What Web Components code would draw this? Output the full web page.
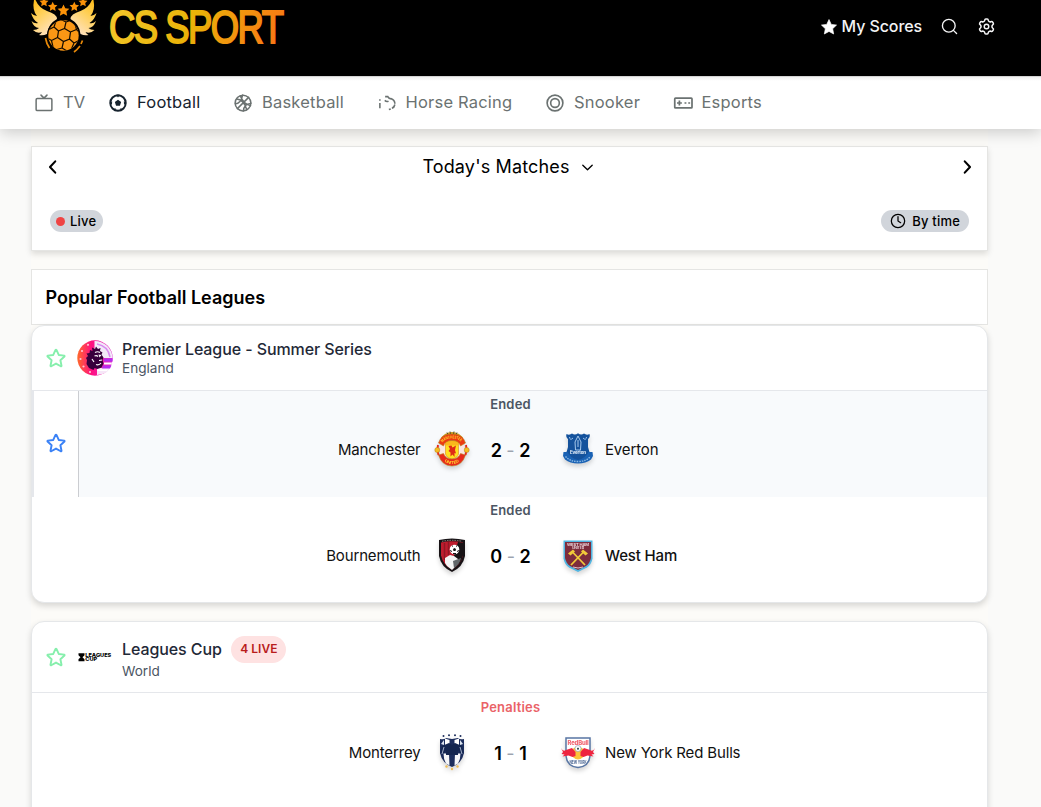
<!DOCTYPE html>
<html lang="en">
<head>
<meta charset="utf-8">
<title>CS Sport</title>
<style>
body{margin:0;background:#fafaf9;font-family:Inter,"Liberation Sans",sans-serif;color:#000;overflow:hidden;height:807px}
</style>
</head>
<body>
<cs-app></cs-app>
<script>
const define=(name,html,after)=>{
  const t=document.createElement('template');t.innerHTML=html;
  customElements.define(name,class extends HTMLElement{
    constructor(){super();this.attachShadow({mode:'open'}).append(t.content.cloneNode(true));}
    connectedCallback(){if(after)after(this,this.shadowRoot);}
  });
};

const STAR='M12 .8l3.400 7.300 7.900 1-5.800 5.500 1.500 7.900L12 18.600l-7 3.900 1.500-7.900L.7 9.100l7.900-1z';
const line=(b,w=2)=>`<g fill="none" stroke="currentColor" stroke-width="${w}" stroke-linecap="round" stroke-linejoin="round">${b}</g>`;
const ICONS={
  starFill:`<path fill="currentColor" stroke="currentColor" stroke-linejoin="round" d="${STAR}"/>`,
  star:line('<path d="M11.500 3.200a.6.6 0 0 1 1 0l2.500 5.500 5.900.7a.6.6 0 0 1 .3 1l-4.400 4.100 1.200 5.900a.6.6 0 0 1-.8.600L12 18.100l-5.200 2.900a.6.6 0 0 1-.8-.6l1.200-5.900-4.400-4.100a.6.6 0 0 1 .3-1L9 8.700z"/>',2.100),
  search:line('<circle cx="11" cy="11" r="9"/><path d="M17.500 17.500 22 22"/>',1.900),
  gear:line('<path transform="translate(12 12) scale(1.070) translate(-12 -12)" d="M9.600 3.900c.1-.9.7-1.900 1.500-1.900h1.800c.8 0 1.400 1 1.500 1.900.1.8.6 1.300 1.300 1.700s1.400.4 2.100.1c.8-.4 1.900-.3 2.300.4l.9 1.600c.4.700 0 1.700-.8 2.200-.6.5-1 1.200-1 2.100s.4 1.600 1 2.100c.8.5 1.200 1.500.8 2.200l-.9 1.600c-.4.700-1.500.8-2.300.4-.7-.3-1.400-.3-2.100.1s-1.200.9-1.300 1.700c-.1.9-.7 1.900-1.500 1.900h-1.800c-.8 0-1.400-1-1.500-1.900-.1-.8-.6-1.300-1.300-1.700s-1.400-.4-2.100-.1c-.8.4-1.900.3-2.300-.4L3 16.300c-.4-.7 0-1.700.8-2.200.6-.5 1-1.200 1-2.100s-.4-1.600-1-2.100C3 9.400 2.600 8.400 3 7.700l.9-1.600c.4-.7 1.500-.8 2.300-.4.7.3 1.400.3 2.100-.1s1.200-.9 1.300-1.700z"/><circle cx="12" cy="12" r="3.200"/>',2),
  tv:line('<rect x="1.500" y="6" width="21" height="16" rx="1.500"/><path d="M8 1.500 12 5.500 16 1.500"/>',2),
  ball:`<circle cx="12" cy="12" r="10.300" fill="none" stroke="currentColor" stroke-width="2.600"/><path fill="currentColor" d="M12 7.800l4.200 3-1.600 5H9.400l-1.600-5zM9.500 1h5L12 4.500zM1 12.500l3.200-3L4 14zM23 12.500l-3.200-3 .2 4.500zM6 19.500l3.500-.2-1.500 3zM18 19.500l-3.500-.2 1.500 3z"/>`,
  basket:line('<circle cx="12" cy="12" r="10.500"/><path d="M4.500 19.500 19.500 4.500M3.500 6.500c5.500 0 11 5.500 13.500 14.500M1.800 13c4.500 0 8-3.500 9.700-11.500M12.500 22.500c.5-6 4-9.500 10-10M8.500 2.500c2.500 7 6.500 11.500 13.500 13"/>',2),
  horse:`<g fill="none" stroke="currentColor" stroke-width="2.100"><path d="M2.500 7v2M2.500 12v7M9.500 3.500h3.500q1.500 3 4.500 3M9 8.500q2.500 2.500 5 1M17 6q5.500 2 5.500 7M22.500 14q-.7 4-4 5M17 20l-2.500.8"/></g>`,
  snooker:line('<circle cx="12" cy="12" r="10.500"/><circle cx="12" cy="12" r="5.800"/>',2.200),
  pad:`<g fill="none" stroke="currentColor" stroke-width="2.300"><rect x="1" y="5.500" width="23" height="13" rx="1"/><path d="M4 12h6.500M7.200 8.700v6.600M14 12h2.500M19 12h2.500"/></g>`,
  left:line('<path d="M15 4.500 8 12l7 7.500"/>',2.800),
  right:line('<path d="M9 4.500 16 12l-7 7.500"/>',2.800),
  down:line('<path d="M4.500 8.500 12 15.500 19.500 8.500"/>',2.200),
  clock:line('<circle cx="12" cy="12" r="10"/><path d="M12 5.500V12l4 2.500"/>',1.900)
};
define('cs-icon',`<style>:host{display:block;flex:none;width:var(--s,18px);height:var(--s,18px)}svg{display:block;width:100%;height:100%;overflow:visible}</style><svg viewBox="0 0 24 24"></svg>`,
  (h,r)=>{h.style.setProperty('--s',(h.getAttribute('size')||18)+'px');r.querySelector('svg').innerHTML=ICONS[h.getAttribute('name')];});

const F='font-family="Inter,sans-serif"';
const CRESTS={
  pl:`<defs><linearGradient id="a"><stop offset="0" stop-color="#ff6a2b"/><stop offset=".4" stop-color="#ff1080"/><stop offset="1" stop-color="#e02fce"/></linearGradient></defs>
    <circle cx="18" cy="18" r="17.700" fill="url(#a)"/><path d="M17.500 1A17.500 17.500 0 0 1 35.500 18H25l-7.500-6z" fill="#f2e9f8"/><path d="M20 4q11 2 13 13" fill="none" stroke="#d98af0" stroke-width="1.500"/><path d="M20 28h13l-3 4q-5 3-10 3z" fill="#f6e6f7"/>
    <path d="M27 18.500h8.500v3H27zM26 25.500h8.500l-1.500 3h-8z" fill="#b52df0"/><path d="M27 22.500h8l-.5 2H27zM21 29.500h10l-1 1.500H20z" fill="#fff"/>
    <g fill="#ffc3d4"><circle cx="11" cy="4.800" r="1.100"/><circle cx="5" cy="11" r="1.100"/><circle cx="3.500" cy="19" r="1.100"/><circle cx="6.500" cy="26.500" r="1.100"/><circle cx="13" cy="32" r="1.100"/></g>
    <path d="M13 10l2.500 1L15 7.500l3 1.500 1-2.500 2 2.500 2.500-1-.5 3 2.500 1.500-1 2 2 3-1 2.500 1 3.500-2 4-4 1.500-3-1-1 2-4.500-2-2.500-4 .500-4L9 18l2-2-1.500-2.500 3-.5z" fill="#37003c"/><path d="M18 12.500q2.500-1.500 5 0M17.500 16q2-1 3.500.5M22 20.500l3-.5M19 24.500q3 1 5-1.500M15 19l2 3" stroke="#fff" stroke-width="1.200" fill="none"/><path d="M21.500 14.500l3 .5-2 2.500z" fill="#fff"/>`,
  lc:`<path d="M1.500 14.300h6v2l-2 2 2 2v2h-6v-2l2-2-2-2z"/><g ${F} font-weight="800" font-size="5"><text x="8.300" y="18" textLength="26" lengthAdjust="spacingAndGlyphs">LEAGUES</text><text x="8.300" y="22.300" textLength="12" lengthAdjust="spacingAndGlyphs">CUP</text></g>`,
  mun:`<path d="M11 3q7-4 14 0l4 3.500-2 3H9l-2-3z" fill="#c99a20"/><path d="M13 1.500l1 2M16 .5l.500 2.500M20 .5 19.500 3M23 1.500l-1 2" stroke="#55502c" stroke-width="1"/>
    <path d="M6 12h24v13H6z" fill="#fbe6e0"/><path d="M11.500 10h13v13q-1 4-6.500 5-5.500-1-6.500-5z" fill="#ffdf20" stroke="#e0861a" stroke-width=".6"/><path d="M11.500 10h13v4.500h-13z" fill="#fab81c"/>
    <path d="M4.500 12Q7 3 18 3t13.500 9l-5 3Q25 9.500 18 9.500T9.500 15z" fill="#ec3a12" stroke="#b8801a" stroke-width=".6"/>
    <path d="M4 14q-1.500 5 .5 10M32 14q1.500 5-.5 10" fill="none" stroke="#e8291c" stroke-width="2"/><circle cx="3.300" cy="19" r="2.500" fill="#f6be20" stroke="#b87d10" stroke-width=".5"/><circle cx="32.700" cy="19" r="2.500" fill="#f6be20" stroke="#b87d10" stroke-width=".5"/>
    <path d="M14.500 15l3-.5 1 2 3.500-2-1 4.500 1 3.500-1.500-.5v4l-2-2.500-2 2V21.500l-2-1.500 1.500-2z" fill="#df2a16"/>
    <path d="M4.500 24l5-1.500Q11.500 28 18 28t8.500-5.500l5 1.500Q28 35 18 35 8 35 4.500 24z" fill="#e8291c" stroke="#b8801a" stroke-width=".6"/>
    <defs><path id="m1" d="M8.500 11.500Q11 7.500 18 7.500t9.500 4"/><path id="m2" d="M9 28.500Q12 33 18 33t9-4.500"/></defs><g ${F} fill="#ffce2a" font-weight="700" font-size="4"><text><textPath href="#m1" textLength="20" lengthAdjust="spacingAndGlyphs">MANCHESTER</textPath></text><text><textPath href="#m2" startOffset="2" textLength="16" lengthAdjust="spacingAndGlyphs">UNITED</textPath></text></g>`,
  eve:`<path d="M6.500 3q3 1.500 5.500-.5 3 2 6-.3 3 2.300 6 .3 2.500 2 5.500.5 1 3-1.500 5v8q1 4 2 6H6q1-2 2-6V8Q5.500 6 6.500 3z" fill="#14529c"/><path d="M18 5l3 6-.5 8h-5L15 11z" fill="none" stroke="#a5c8ec" stroke-width="1"/><path d="M18 9v7" stroke="#a5c8ec"/><path d="M9.500 6q.5 4 3.500 1M26.500 6q-.5 4-3.500 1" stroke="#9ac1eb" fill="none"/><path d="M3.500 21h5q3 5.500 9.500 6.500 6.500-1 9.500-6.500h5l.5 4-2 3.500q-5 4-13 4T5 28.500l-2-3.500z" fill="#1a62b4"/>
    <path d="M7 20h22q-3 7-11 9-8-2-11-9z" fill="#14529c"/><text x="10" y="23" ${F} font-size="4.800" font-weight="700" fill="#e7f1fb" textLength="16" lengthAdjust="spacingAndGlyphs">Everton</text><path d="M5.500 25.500q4.500 5 12.500 5t12.500-5" stroke="#8dbae4" stroke-width="1.400" stroke-dasharray="1.500 1" fill="none"/>`,
  bou:`<path d="M5 3q13-3 26 0v16q-2 11-13 16Q7 30 5 19z" fill="#171215"/><path d="M7 5.500q11-2.500 22 0v13q-2 9-11 14Q9 28 7 18.500z" fill="#be1c2e"/><path d="M10.500 6v17M14.500 5V18" stroke="#8f1724" stroke-width="1.500"/><path d="M24 5l5 .8v12.700q-2 9-11 14l-4-4 6-10z" fill="#171215"/><path d="M11 21l5-3 4 1 4 3 1 3-5 6-2 2-5-4-2-3z" fill="#f4f4f4"/><path d="M19 24l8-3q-1 6-7 10z" fill="#626669"/><circle cx="20.500" cy="12.500" r="4.800" fill="#fff"/><path d="M20.500 11l1.500 1-.5 2h-2l-.5-2z" fill="#171215"/><path d="M16.500 13l1 2M24.500 13l-1 2M19 16.500h3M18 9.500l1-.8M23 9.500l-1-.8" stroke="#171215" stroke-width="1"/><path d="M8 4.300q10-2 20 0" stroke="#978883" fill="none" stroke-width="1" stroke-dasharray="1.500 1"/>`,
  whu:`<path d="M3.500 3.500h29v18q-1 6-5.500 9l-9 4.500-9-4.500q-4.500-3-5.500-9z" fill="#51b6e2"/><path d="M5 5h26v16q-1 5-5 8l-8 4-8-4q-4-3-5-8z" fill="#7d2c3d"/><g ${F} fill="#f1dfe4" font-weight="600"><text x="7" y="8.700" font-size="4" textLength="22" lengthAdjust="spacingAndGlyphs">WEST HAM</text><text x="12" y="11.700" font-size="3.200" textLength="12" lengthAdjust="spacingAndGlyphs">UNITED</text></g><path d="M11 28 24 14.500M25 28 12 14.500" stroke="#f1ca3a" stroke-width="1.800"/><path d="M8 16.500l5-4 2 2-4.500 4zM28 16.500l-5-4-2 2 4.500 4z" fill="#f1ca3a"/><path d="M13 30q5 2 10 0" stroke="#e5bdc6" fill="none"/>`,
  mon:`<path d="M6 5q4 1 6-1l6 1 6-1q2 2 6 1v14q-2 10-12 14Q8 29 6 19z" fill="#1c2d5c"/><path d="M11 4.500l4.500 1.500v3.500L11 12zM25 4.500l-4.500 1.500v3.500L25 12z" fill="#fff"/><path d="M7 10l3-4v5zM29 10l-3-4v5z" fill="#dce4ef"/><path d="M9.500 19.500h5.500l.500 12L12 29.500q-2.500-4-2.500-10zM26.500 19.500H21l-.5 12 3.500-2q2.500-4 2.500-10z" fill="#f6f7fa"/><path d="M8 12l7-3 3 2 3-2 7 3 1.500 8-3.500-1-2-3v5H12v-5l-2 3-3.500 1z" fill="#142650"/><path d="M10 13l-2 7M26 13l2 7" stroke="#a4b1cc" stroke-width="1"/><g fill="#1c2d5c"><circle cx="9.500" cy="2" r="1"/><circle cx="15" cy="1.200" r="1"/><circle cx="21" cy="1.200" r="1"/><circle cx="26.500" cy="2" r="1"/></g><g fill="#eebd55"><circle cx="12.500" cy="32.500" r="1.200"/><circle cx="18" cy="35" r="1.200"/><circle cx="23.500" cy="32.500" r="1.200"/></g>`,
  nyr:`<path d="M6 4h24v18q-1 10.500-12 11.500Q7 32.500 6 22z" fill="#fff" stroke="#5876a4" stroke-width="1.500"/><circle cx="18" cy="19" r="6.500" fill="#fbc43a"/><path d="M1 14q2 4 5 2l6-2 3.500 4v4l-3 1-4-1.500-6 1 2-2-3-.5 1.500-2zM35 14q-2 4-5 2l-6-2-3.500 4v4l3 1 4-1.500 6 1-2-2 3-.5-1.500-2z" fill="#ee2540"/><circle cx="18" cy="14.500" r="3" fill="#fff" stroke="#8093ae" stroke-width=".6"/><path d="M18 13.500l1 .8-.4 1.500h-1.200l-.4-1.500z" fill="#244"/><g ${F} font-weight="800"><text x="7.500" y="10.500" font-size="6" fill="#f06570" textLength="21" lengthAdjust="spacingAndGlyphs">RedBull</text><text x="9.500" y="29.500" font-size="5" fill="#60789f" textLength="17" lengthAdjust="spacingAndGlyphs">NEW YORK</text></g>`
};
define('cs-crest',`<style>:host{display:block;width:36px;height:36px;flex:none}:host([shadow]){filter:drop-shadow(0 3px 2px rgba(0,0,0,.16))}svg{display:block;width:100%;height:100%;overflow:visible}</style><svg viewBox="0 0 36 36"></svg>`,
  (h,r)=>{r.querySelector('svg').innerHTML=CRESTS[h.getAttribute('team')];});

const smallStar=(x,y,s)=>`<path transform="translate(${x} ${y}) scale(${s}) translate(-12 -12)" d="${STAR}"/>`;
define('cs-brand',`<style>:host{display:block;width:270px;height:76px}svg{display:block;overflow:visible}</style>
<svg width="270" height="76" viewBox="20 0 270 76"><defs>
<linearGradient id="w" x1="0" y1="0" x2=".6" y2="1"><stop offset="0" stop-color="#ffb910"/><stop offset=".45" stop-color="#ffd058"/><stop offset="1" stop-color="#ffe2c0"/></linearGradient>
<linearGradient id="t" gradientUnits="userSpaceOnUse" x1="110" y1="-20" x2="275" y2="60"><stop offset="0" stop-color="#f5cb32"/><stop offset=".5" stop-color="#eab308"/><stop offset="1" stop-color="#f97316"/></linearGradient>
<clipPath id="b"><circle cx="63.500" cy="35.500" r="15.200"/></clipPath></defs>
<path id="wing" fill="url(#w)" d="M34 0h1.500Q39 8 47 11 57 14 57 19 48 24 47 34 43 36 39 35q2-1 3-3-5 2-9-2 4 0 6-2-5 0-7.500-7 3 3 6.500 2-5-3-7-10 3 3 6 3-5-6-3-16z"/>
<use href="#wing" transform="matrix(-1 0 0 1 127.500 0)"/>
<circle cx="63.500" cy="35.500" r="16.500" fill="#000"/>
<g clip-path="url(#b)"><rect x="47" y="19" width="34" height="34" fill="#fa9715"/>
<path d="M58.500 31l6-2.500 6 3.500-1 7-6 2.500-6-4zM64.500 28.500 66 22M70.500 32l6-2.500M69.500 39l4.500 4M63.500 41.500 62 48M57.500 37.500l-6 3M58.500 31 54 27M66 22l-6-3M66 22l6-2M54 27l-6 3M54 27l2-6M76.500 29.500 75 24M76.500 29.500l4 4M74 43l6-3M74 43l-3 7M62 48l-7 2M62 48l5 3M51.500 40.500l-5-3M51.500 40.500 53 47" fill="none" stroke="#130b00" stroke-width="1.200"/></g>
<g fill="none" stroke="#e88908" stroke-width="1.700"><path d="M45.500 38q1 6 4 10M82.500 40.500l-1.500 3.500M80 46q-3 4-6 6"/></g>
<g fill="#fb9208">${smallStar(44,2,.4)}${smallStar(52.700,6.500,.42)}${smallStar(63.500,10.200,.52)}${smallStar(74.300,6.500,.42)}${smallStar(83,2,.4)}</g>
<text x="109" y="43" font-family="Liberation Sans,Arial,sans-serif" font-size="46.500" textLength="173.500" lengthAdjust="spacingAndGlyphs" fill="url(#t)" stroke="url(#t)" stroke-width="1.900" letter-spacing="-2">CS SPORT</text></svg>`);

define('cs-header',`<style>:host{display:flex;height:76px;background:#000;justify-content:space-between;padding:0 46px 0 20px;color:#f4f4f5}
nav{display:flex;align-items:center;height:53px}.s{display:flex;align-items:center;gap:5px;font-size:16px;font-weight:500;margin-right:19px}.s span{letter-spacing:-.1px;margin-top:-1px}.q{margin-right:20px}</style>
<cs-brand></cs-brand><nav><div class="s"><cs-icon name="starFill" size="16" style="color:#fff"></cs-icon><span>My Scores</span></div><cs-icon class="q" name="search" size="17"></cs-icon><cs-icon name="gear" size="17"></cs-icon></nav>`);

customElements.define('cs-sport',class extends HTMLElement{
  constructor(){super();this.attachShadow({mode:'open'});}
  connectedCallback(){this.shadowRoot.innerHTML=`<style>:host{display:flex;align-items:center;gap:10px;width:var(--w);flex:none;color:#6b7271;font-size:16.500px;letter-spacing:.2px;white-space:nowrap}:host([active]){color:#17232e}span{margin-top:-3px}</style><cs-icon name="${this.getAttribute('icon')}" size="18"></cs-icon><span><slot></slot></span>`;}
});
define('cs-nav',`<style>:host{display:flex;align-items:center;height:52px;padding:0 0 0 35px;background:linear-gradient(#f1f1f1,#fff 4px);border-top:1px solid #d4d4d4;box-shadow:0 4px 14px rgba(0,0,0,.18);position:relative;z-index:1}</style>
<cs-sport icon="tv" style="--w:74px">TV</cs-sport><cs-sport icon="ball" active style="--w:125px">Football</cs-sport><cs-sport icon="basket" style="--w:143.500px">Basketball</cs-sport><cs-sport icon="horse" style="--w:168.500px">Horse Racing</cs-sport><cs-sport icon="snooker" style="--w:127.500px">Snooker</cs-sport><cs-sport icon="pad">Esports</cs-sport>`);

define('cs-pill',`<style>:host{display:flex;align-items:center;box-sizing:border-box;height:22px;border-radius:11px;background:#d1d5db;font-size:13px;letter-spacing:.2px;font-weight:500;padding:0 6px}</style><slot></slot>`);
define('cs-day',`<style>:host{display:flex;flex-direction:column;justify-content:space-between;box-sizing:border-box;height:105px;background:#fff;border:1px solid #e5e5e3;box-shadow:0 3px 6px rgba(0,0,0,.13);padding:10px 11px 18px 11.500px}
.r{display:flex;justify-content:space-between;align-items:center;height:20px}.t{display:flex;align-items:center;gap:10px;font-size:18px;letter-spacing:.15px;margin-right:2.500px}.t span{margin-top:-1px}.f{display:flex;justify-content:space-between;padding:0 7px 0 6.500px}.dot{width:9px;height:9px;border-radius:50%;background:#ef4444;margin-right:5px}</style>
<div class="r"><cs-icon name="left" size="18"></cs-icon><div class="t"><span>Today's Matches</span><cs-icon name="down" size="15"></cs-icon></div><cs-icon name="right" size="18"></cs-icon></div>
<div class="f"><cs-pill style="padding-right:6.500px"><i class="dot"></i>Live</cs-pill><cs-pill style="padding:0 9px"><cs-icon name="clock" size="16" style="margin-right:6px"></cs-icon>By time</cs-pill></div>`);
define('cs-title',`<style>:host{display:flex;align-items:center;box-sizing:border-box;height:56px;background:#fff;border:1px solid #e5e5e3;padding-left:13.500px;font-size:18px;font-weight:600}</style><slot></slot>`);

customElements.define('cs-league',class extends HTMLElement{
  constructor(){super();this.attachShadow({mode:'open'});}
  connectedCallback(){const a=n=>this.getAttribute(n),live=a('live');
  this.shadowRoot.innerHTML=`<style>:host{display:block;background:#fff;border:1px solid #e5e7e9;border-radius:13px;box-shadow:0 3px 6px rgba(0,0,0,.15);overflow:hidden;box-sizing:border-box}
header{display:flex;align-items:center;height:${live?70:64}px;border-bottom:1px solid #e5e7eb;padding-left:13px}
.c{margin:0 9px 0 10px}.n{display:flex;align-items:center;height:${live?27:19}px;font-size:16px;letter-spacing:-.09px;font-weight:530;color:#1f2937}.n>span:first-child{margin-top:${live?-1:0}px}.k{font-size:13.600px;line-height:${live?17:18}px;color:#4b5563}
.b{display:flex;align-items:center;height:27px;padding:0 9px;margin-left:9.500px;border-radius:14px;background:#fee2e2;color:#b91c1c;font-size:12px;letter-spacing:0;font-weight:600;box-sizing:border-box;padding-bottom:1px}
.w{padding-top:${live?1:0}px}</style>
<header><cs-icon name="star" size="22" style="color:#86efac"></cs-icon><cs-crest class="c" team="${a('team')}"></cs-crest><div class="w"><div class="n"><span>${a('name')}</span>${live?`<span class="b">${live}</span>`:''}</div><div class="k">${a('country')}</div></div></header><slot></slot>`;}
});
customElements.define('cs-match',class extends HTMLElement{
  constructor(){super();this.attachShadow({mode:'open'});}
  connectedCallback(){const a=n=>this.getAttribute(n);const [x,y]=a('score').split('-');const pen=a('status')==='Penalties';
  this.shadowRoot.innerHTML=`<style>:host{display:grid;height:106px}
.m{grid-area:1/1}.row{display:grid;grid-template-columns:388.500px 36px 81px 36px 1fr;align-items:center;margin-top:18px}
:host([fav]) .m{background:#f8fafc}.st{text-align:center;font-size:13px;letter-spacing:.2px;font-weight:600;color:${pen?'#ea6368':'#4b5563'};padding-top:${pen?5:4}px;line-height:18px;padding-left:2px}
.row{font-size:15px;letter-spacing:-.15px;color:#111}.h{text-align:right}.h,.a{margin-top:1px}.row cs-crest:nth-child(2){margin-left:13px}.row cs-crest:nth-child(4){margin-left:22.500px}
.sc{display:flex;justify-content:center;gap:4.500px;font-size:18px;letter-spacing:0;font-weight:600;color:#000;margin-left:13.500px;width:81px;margin-top:2px}.sc i{font-style:normal;font-weight:400;color:#9ca3af}.a{margin-left:31.500px}.win{font-weight:540}
.f{grid-area:1/1;justify-self:start;width:47px;box-sizing:border-box;display:flex;align-items:center;justify-content:center;padding-bottom:2px;background:#fff;border-left:2px solid #e5e7eb;border-right:1px solid #cbcdd1}</style>
<div class="m"><div class="st">${a('status')}</div><div class="row"><div class="h">${a('home')}</div><cs-crest shadow team="${a('hc')}"></cs-crest><div class="sc"><span>${x}</span><i>-</i><span>${y}</span></div><cs-crest shadow team="${a('ac')}"></cs-crest><div class="a ${a('win')?'win':''}">${a('away')}</div></div></div>
${this.hasAttribute('fav')?'<div class="f"><cs-icon name="star" size="22" style="color:#3b82f6"></cs-icon></div>':''}`;}
});
define('cs-app',`<style>:host{display:block}main{width:957px;margin-left:31px;padding-top:17px;background:#fcfbf8;min-height:661px;box-sizing:border-box}cs-title{margin-top:18px}.first{height:278px}.second{margin-top:18px;height:210px}</style>
<cs-header></cs-header><cs-nav></cs-nav>
<main><cs-day></cs-day><cs-title>Popular Football Leagues</cs-title>
<cs-league class="first" team="pl" name="Premier League - Summer Series" country="England"><cs-match fav status="Ended" home="Manchester" hc="mun" score="2-2" ac="eve" away="Everton"></cs-match><cs-match status="Ended" home="Bournemouth" hc="bou" score="0-2" ac="whu" away="West Ham" win="1"></cs-match></cs-league>
<cs-league class="second" team="lc" name="Leagues Cup" country="World" live="4 LIVE"><cs-match status="Penalties" home="Monterrey" hc="mon" score="1-1" ac="nyr" away="New York Red Bulls"></cs-match></cs-league></main>`);
</script>
</body>
</html>
